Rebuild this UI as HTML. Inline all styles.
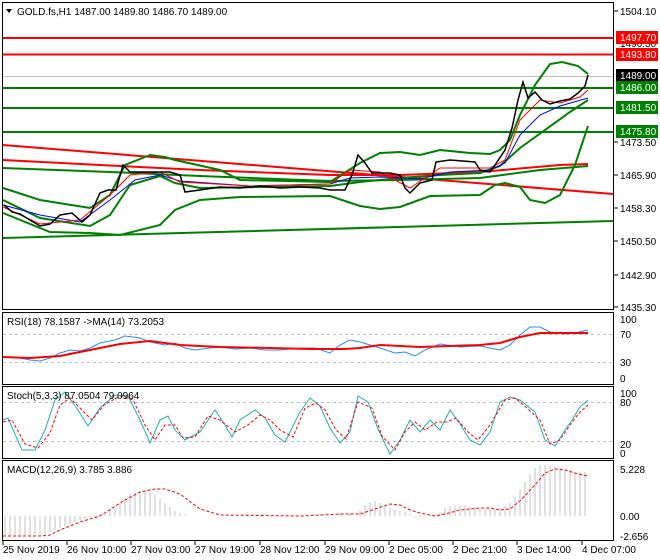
<!DOCTYPE html>
<html><head><style>
body{margin:0;background:#fff;width:660px;height:560px;overflow:hidden;font-family:"Liberation Sans",sans-serif;}
svg{position:absolute;left:0;top:0}
text{font-family:"Liberation Sans",sans-serif;font-size:10px;fill:#000}
</style></head><body>
<svg width="660" height="560" viewBox="0 0 660 560">
<rect x="2.5" y="2.5" width="611" height="307" fill="#fff" stroke="#000"/>
<rect x="2.5" y="312.5" width="611" height="72" fill="#fff" stroke="#000"/>
<rect x="2.5" y="386.5" width="611" height="72" fill="#fff" stroke="#000"/>
<rect x="2.5" y="460.5" width="611" height="80" fill="#fff" stroke="#000"/>
<line x1="3" y1="76.5" x2="613" y2="76.5" stroke="#c0c0c0"/>
<g stroke-width="2" fill="none">
<line x1="3" y1="38" x2="613" y2="38" stroke="#f00"/>
<line x1="3" y1="54.5" x2="613" y2="54.5" stroke="#f00"/>
<line x1="3" y1="88" x2="613" y2="88" stroke="#008000"/>
<line x1="3" y1="108" x2="613" y2="108" stroke="#008000"/>
<line x1="3" y1="132" x2="613" y2="132" stroke="#008000"/>
<line x1="3" y1="145" x2="613" y2="194" stroke="#f00"/>
<line x1="3" y1="238" x2="613" y2="221" stroke="#008000"/>
<polyline stroke="#f00" points="3,160 100,165 200,170 330,175 400,175 480,172 560,165 588,164"/>
<polyline stroke="#008000" points="3,168 110,172 200,176 330,181 400,180 480,178 540,170 588,166"/>
<polyline stroke="#008000" points="3,188 40,200 90,208 110,195 125,165 150,155 165,157 175,160 220,170 240,180 330,182 360,163 380,153 400,152 420,155 440,150 470,153 490,154 500,150 510,140 520,115 535,85 550,64 562,62 578,66 588,74"/>
<polyline stroke="#008000" points="3,213 40,228 50,232 90,233 120,235 160,225 175,210 200,200 240,197 330,196 360,206 380,209 400,207 430,196 480,195 495,185 505,183 520,187 530,200 545,203 560,195 575,165 588,126"/>
<polyline stroke="#008000" points="3,200 40,218 90,226 110,215 130,185 160,176 175,183 200,188 330,186 360,182 400,178 440,175 480,173 500,166 520,148 545,130 570,112 588,100"/>
</g>
<polyline fill="none" stroke="#00f" points="3,205 40,215 80,222 110,200 135,180 160,175 180,181 250,186 330,184 350,178 380,177 420,179 450,172 490,170 505,163 520,135 540,115 560,106 588,98"/>
<polyline fill="none" stroke="#f00" points="3,207 40,224 80,220 110,195 130,175 160,172 180,182 250,186 330,184 350,170 380,172 410,188 440,168 490,168 505,160 520,120 540,100 560,103 580,97 588,90"/>
<polyline fill="none" stroke="#000" stroke-width="1.5" points="4,205 12,212 20,214 30,220 40,226 50,224 60,215 72,213 82,222 90,215 100,193 108,190 116,190 123,165 130,172 150,172 170,172 180,175 185,192 200,190 220,187 240,188 260,186 280,188 300,187 320,188 330,190 345,190 352,175 358,155 365,163 372,173 390,173 400,175 405,188 410,193 420,183 432,180 436,162 450,160 475,162 480,170 490,172 495,165 505,150 512,128 518,100 523,82 528,98 535,92 542,100 550,104 560,101 570,99 578,93 585,86 588,75"/>
<g stroke="#000"><path d="M614 11h4M614 142h4M614 175h4M614 208h4M614 241h4M614 275h4M614 307h4"/></g>
<text x="620" y="15">1504.10</text>
<text x="620" y="47">1496.30</text>
<text x="620" y="146">1473.50</text>
<text x="620" y="179">1465.90</text>
<text x="620" y="212">1458.30</text>
<text x="620" y="245">1450.50</text>
<text x="620" y="279">1442.90</text>
<text x="620" y="311">1435.30</text>
<rect x="616" y="31" width="42" height="13" fill="#f00"/><text x="620" y="41" style="fill:#fff">1497.70</text>
<rect x="616" y="48" width="42" height="13" fill="#f00"/><text x="620" y="58" style="fill:#fff">1493.80</text>
<rect x="616" y="69" width="42" height="13" fill="#000"/><text x="620" y="79" style="fill:#fff">1489.00</text>
<rect x="616" y="81" width="42" height="13" fill="#008000"/><text x="620" y="91" style="fill:#fff">1486.00</text>
<rect x="616" y="101" width="42" height="13" fill="#008000"/><text x="620" y="111" style="fill:#fff">1481.50</text>
<rect x="616" y="125" width="42" height="13" fill="#008000"/><text x="620" y="135" style="fill:#fff">1475.80</text>
<polygon points="6,9 12,9 9,13" fill="#000"/>
<text x="17" y="15">GOLD.fs,H1  1487.00 1489.80 1486.70 1489.00</text>
<g stroke="#c0c0c0" stroke-dasharray="3,3"><line x1="3" y1="334.5" x2="613" y2="334.5"/><line x1="3" y1="362.5" x2="613" y2="362.5"/><line x1="3" y1="402.5" x2="613" y2="402.5"/><line x1="3" y1="441.5" x2="613" y2="441.5"/></g>
<polyline fill="none" stroke="#1e90ff" points="3,357 15,357 30,360 40,361 50,358 60,353 70,350 80,351 90,348 100,343 115,340 125,336 140,338 150,342 165,345 175,343 185,348 195,350 210,348 220,347 235,349 250,348 265,350 280,350 300,348 315,348 330,353 340,345 350,340 360,342 380,348 395,353 405,352 415,356 425,350 440,344 460,347 480,346 500,350 510,345 520,335 530,327 540,327 550,332 565,334 575,333 588,330"/>
<polyline fill="none" stroke="#f00" stroke-width="2" points="3,357 30,358 60,356 90,350 120,344 150,341 180,345 220,347 270,348 310,349 345,349 360,348 380,345 420,347 450,346 480,345 500,343 520,337 540,333 560,333 588,333"/>
<text x="7" y="325">RSI(18) 78.1587  -&gt;MA(14) 73.2053</text>
<text x="620" y="323">100</text><text x="620" y="338">70</text><text x="620" y="366">30</text><text x="620" y="382">0</text>
<polyline fill="none" stroke="#20b2aa" points="3,420 8,418 22,450 35,450 45,430 55,400 65,392 78,410 88,426 100,408 115,395 128,396 140,420 150,443 160,420 168,416 175,430 185,440 200,432 215,410 225,425 232,437 240,420 255,410 265,418 275,435 285,442 300,412 310,398 320,406 330,428 340,443 350,432 358,396 368,402 378,429 390,454 400,440 410,420 420,432 430,420 440,430 450,410 460,424 470,440 480,445 490,432 500,402 510,397 520,400 535,412 545,440 555,446 565,430 572,420 580,407 588,400"/>
<polyline fill="none" stroke="#f00" stroke-dasharray="3,2" points="3,422 12,420 25,444 38,448 50,433 60,405 70,398 82,410 92,420 104,405 120,396 133,400 145,425 155,440 165,425 175,425 183,438 195,437 208,416 220,420 235,432 248,425 260,415 270,420 280,430 293,437 305,408 316,403 325,410 336,430 346,439 358,402 372,408 382,436 395,450 405,432 415,422 425,430 437,422 447,422 456,418 468,432 478,440 490,425 505,400 515,398 527,408 540,420 550,444 560,440 570,425 580,412 588,405"/>
<text x="7" y="399">Stoch(5,3,3) 87.0504 79.0964</text>
<text x="620" y="397">100</text><text x="620" y="406">80</text><text x="620" y="448">20</text><text x="620" y="457">0</text>
<g stroke="#c0c0c0"><path d="M5 516V535M10 516V535M15 516V535M20 516V535M25 516V535M30 516V535M35 516V535M40 516V535M45 516V534M50 516V532M55 516V530M60 516V528M65 516V526M70 516V524M75 516V522M80 516V520M85 516V519M90 516V518M95 516V517M100 516V516M105 516V514M110 516V511M115 516V508M120 516V504M125 516V498M130 516V494M135 516V492M140 516V491M145 516V491M150 516V492M155 516V495M160 516V499M165 516V503M170 516V507M175 516V511M180 516V513M185 516V515M190 516V516M320 516V514M330 516V515M340 516V513M350 516V513M360 516V510M365 516V505M370 516V502M375 516V501M380 516V503M385 516V506M390 516V508M395 516V510M400 516V511M405 516V512M410 516V514M415 516V517M420 516V517M425 516V516M430 516V515M440 516V512M445 516V508M450 516V506M455 516V506M460 516V506M465 516V506M470 516V507M475 516V507M480 516V509M485 516V509M490 516V509M495 516V509M500 516V508M505 516V506M510 516V503M515 516V497M520 516V490M525 516V482M530 516V474M535 516V468M540 516V465M545 516V465M550 516V466M555 516V467M560 516V468M565 516V469M570 516V470M575 516V472M580 516V472M585 516V472"/></g>
<polyline fill="none" stroke="#f00" stroke-dasharray="3,2" points="3,536 40,536 50,535 60,530 80,522 100,516 120,503 140,492 155,489 165,489 180,494 200,509 220,515 300,516 320,515 340,514 360,514 375,509 390,504 400,505 410,510 420,513 435,516 445,514 460,510 480,508 490,508 500,510 510,509 520,501 535,485 545,473 555,469 565,470 578,474 588,476"/>
<text x="7" y="473">MACD(12,26,9) 3.785 3.886</text>
<text x="620" y="473">5.228</text><text x="620" y="520">0.00</text><text x="620" y="540">-2.656</text>
<g stroke="#000"><path d="M3 541V545M67 541V545M131 541V545M195 541V545M260 541V545M325 541V545M389 541V545M453 541V545M517 541V545M582 541V545"/></g>
<text x="3" y="553">25 Nov 2019</text><text x="67" y="553">26 Nov 10:00</text><text x="131" y="553">27 Nov 03:00</text><text x="195" y="553">27 Nov 19:00</text><text x="260" y="553">28 Nov 12:00</text><text x="325" y="553">29 Nov 09:00</text><text x="389" y="553">2 Dec 05:00</text><text x="453" y="553">2 Dec 21:00</text><text x="517" y="553">3 Dec 14:00</text><text x="582" y="553">4 Dec 07:00</text>
</svg>
</body></html>
